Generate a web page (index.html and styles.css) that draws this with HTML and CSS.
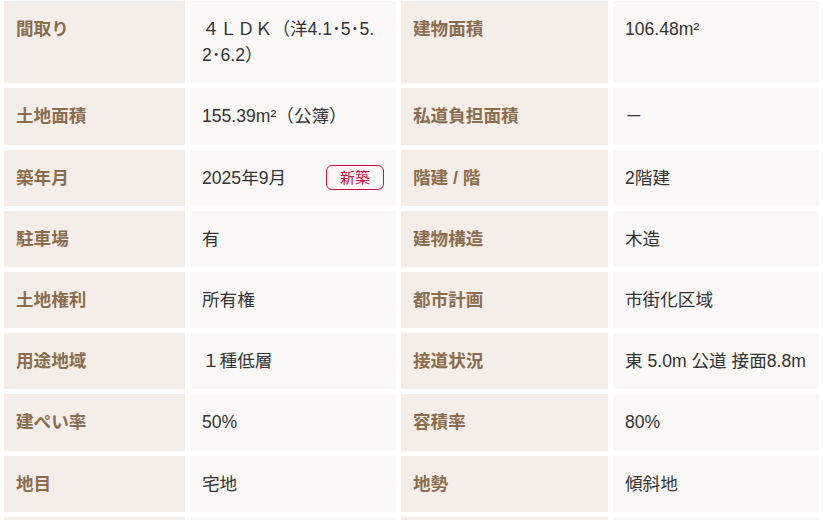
FILE: index.html
```html
<!DOCTYPE html>
<html lang="ja">
<head>
<meta charset="utf-8">
<link rel="stylesheet" href="styles.css">
</head>
<body>
<div class="spec">
  <div class="th">間取り</div>
  <div class="td wrap">４ＬＤＫ（洋4.1･5･5.2･6.2）</div>
  <div class="th">建物面積</div>
  <div class="td">106.48m²</div>

  <div class="th">土地面積</div>
  <div class="td">155.39m²（公簿）</div>
  <div class="th">私道負担面積</div>
  <div class="td">－</div>

  <div class="th">築年月</div>
  <div class="td flex"><span>2025年9月</span><span class="badge">新築</span></div>
  <div class="th">階建 / 階</div>
  <div class="td">2階建</div>

  <div class="th">駐車場</div>
  <div class="td">有</div>
  <div class="th">建物構造</div>
  <div class="td">木造</div>

  <div class="th">土地権利</div>
  <div class="td">所有権</div>
  <div class="th">都市計画</div>
  <div class="td">市街化区域</div>

  <div class="th">用途地域</div>
  <div class="td">１種低層</div>
  <div class="th">接道状況</div>
  <div class="td">東 5.0m 公道 接面8.8m</div>

  <div class="th">建ぺい率</div>
  <div class="td">50%</div>
  <div class="th">容積率</div>
  <div class="td">80%</div>

  <div class="th">地目</div>
  <div class="td">宅地</div>
  <div class="th">地勢</div>
  <div class="td">傾斜地</div>

  <div class="th">設備</div>
  <div class="td">公営水道・本下水</div>
  <div class="th">現況</div>
  <div class="td">未完成</div>
</div>
</body>
</html>
```

FILE: styles.css
```css
html, body {
  margin: 0;
  padding: 0;
  background: #ffffff;
}
body {
  font-family: "Liberation Sans", "Noto Sans CJK JP", sans-serif;
  font-size: 17.6px;
  line-height: 26.2px;
  color: #333333;
}
.spec {
  display: grid;
  grid-template-columns: 181px 206px 207px 206px;
  gap: 5px;
  padding: 1px 4px 0 4px;
}
.th, .td {
  padding: 15px 12px;
}
.th {
  background: #f5eee8;
  color: #8a6d4f;
  font-weight: bold;
}
.td {
  background: #faf8f6;
}
.wrap {
  word-break: break-all;
}
.flex {
  display: flex;
  justify-content: space-between;
  align-items: center;
}
.badge {
  font-size: 15px;
  line-height: 1;
  color: #c8103e;
  border: 1px solid #c8103e;
  border-radius: 6px;
  padding: 4px 13px;
}
```
